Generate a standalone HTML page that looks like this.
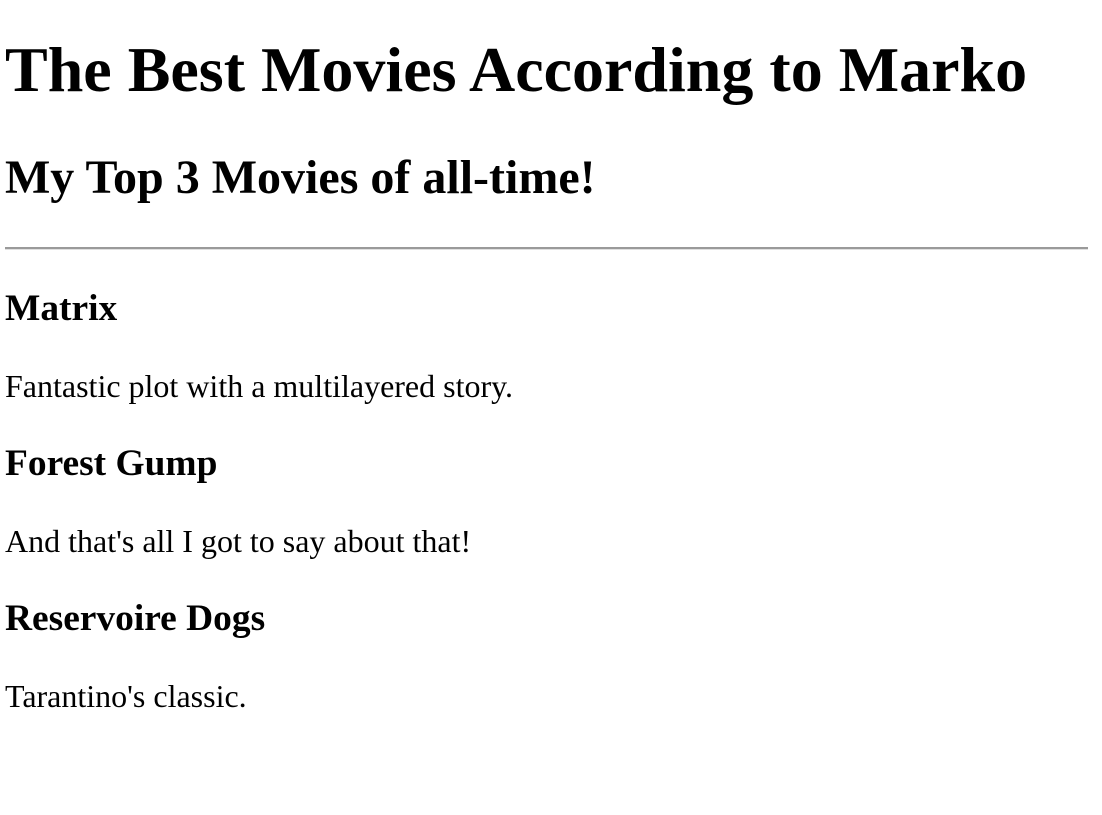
<!DOCTYPE html>
<html><head><meta charset="utf-8"><style>
html,body{background:#fff;}
body{margin:0 14px 0 5px;font-family:"Liberation Serif",serif;font-size:32px;color:#000;}
h1{font-size:64px;margin:33px 0 42.88px;font-weight:bold;}
h2{font-size:48px;margin:41px 0 42px;font-weight:bold;}
h3{font-size:37.44px;margin:37.44px 0;font-weight:bold;}
p{margin:32px 0;}
hr{border:none;border-top:2px solid #9a9a9a;border-bottom:1px solid #e0e0e0;margin:16px 0 17px;height:0;}
</style></head><body>
<h1>The Best Movies According to Marko</h1>
<h2>My Top 3 Movies of all-time!</h2>
<hr>
<h3>Matrix</h3>
<p>Fantastic plot with a multilayered story.</p>
<h3>Forest Gump</h3>
<p>And that's all I got to say about that!</p>
<h3>Reservoire Dogs</h3>
<p>Tarantino's classic.</p>
</body></html>
